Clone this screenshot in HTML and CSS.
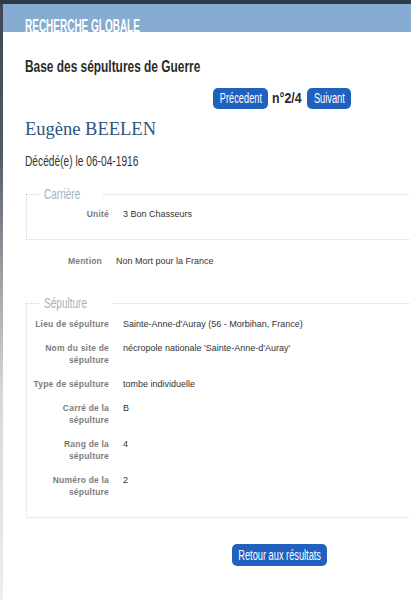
FILE: index.html
```html
<!DOCTYPE html>
<html lang="fr">
<head>
<meta charset="utf-8">
<title>Base des sépultures de Guerre</title>
<link rel="stylesheet" href="styles.css">
</head>
<body>
<div class="topbar"></div>
<div class="frame">
  <div class="edge"></div>
  <div class="main">
    <div class="banner"><span class="banner-title">RECHERCHE GLOBALE</span></div>
    <div class="content">
      <h1 class="base-title"><span class="sx">Base des sépultures de Guerre</span></h1>
      <div class="pager">
        <a class="btn btn-prev"><span class="btn-text">Précedent</span></a>
        <span class="pager-num"><span class="sx">n°2/4</span></span>
        <a class="btn btn-next"><span class="btn-text">Suivant</span></a>
      </div>
      <h2 class="name">Eugène BEELEN</h2>
      <p class="death"><span class="sx">Décédé(e) le 06-04-1916</span></p>

      <fieldset class="group group-carriere">
        <legend class="group-legend"><span class="sx">Carrière</span></legend>
        <div class="row"><div class="label">Unité</div><div class="value">3 Bon Chasseurs</div></div>
      </fieldset>

      <div class="row row-outside"><div class="label">Mention</div><div class="value">Non Mort pour la France</div></div>

      <fieldset class="group group-sepulture">
        <legend class="group-legend"><span class="sx">Sépulture</span></legend>
        <div class="row"><div class="label">Lieu de sépulture</div><div class="value">Sainte-Anne-d'Auray (56 - Morbihan, France)</div></div>
        <div class="row"><div class="label">Nom du site de sépulture</div><div class="value">nécropole nationale 'Sainte-Anne-d'Auray'</div></div>
        <div class="row"><div class="label">Type de sépulture</div><div class="value">tombe individuelle</div></div>
        <div class="row"><div class="label">Carré de la sépulture</div><div class="value">B</div></div>
        <div class="row"><div class="label">Rang de la sépulture</div><div class="value">4</div></div>
        <div class="row"><div class="label">Numéro de la sépulture</div><div class="value">2</div></div>
      </fieldset>

      <div class="back">
        <a class="btn btn-back"><span class="btn-text">Retour aux résultats</span></a>
      </div>
    </div>
  </div>
</div>
</body>
</html>
```
FILE: styles.css
```css
html, body {
  margin: 0;
  padding: 0;
  overflow: hidden;
  background: #ffffff;
}
body {
  font-family: "Liberation Sans", Arial, sans-serif;
  color: #333;
}
.topbar {
  height: 4px;
  background: #2e3b48;
}
.frame {
  display: flex;
  min-height: 596px;
}
.edge {
  width: 3px;
  flex: none;
  background: linear-gradient(#3d4652 0%, #525a64 25%, #9a9ea3 45%, #d6d7d8 65%, #eeeeee 100%);
}
.main {
  flex: 1;
  min-width: 0;
}
.sx {
  display: inline-block;
  white-space: nowrap;
  transform-origin: left center;
}
.banner {
  height: 28px;
  background: #86acd1;
  overflow: hidden;
  padding-left: 22px;
  box-sizing: border-box;
}
.banner-title {
  display: inline-block;
  white-space: nowrap;
  margin-top: 12px;
  font-size: 18px;
  font-weight: bold;
  line-height: 20px;
  color: #ffffff;
  transform: scaleX(0.555);
  transform-origin: left center;
}
.content {
  padding-left: 22px;
}
.base-title {
  margin: 0;
  padding-top: 25px;
  font-weight: bold;
  font-size: 17px;
  line-height: 20px;
  color: #2b2b2b;
}
.base-title .sx {
  transform: scaleX(0.7);
}
.pager {
  display: flex;
  align-items: center;
  gap: 4px;
  margin-top: 11px;
  padding-left: 188px;
}
.btn {
  display: flex;
  justify-content: center;
  align-items: center;
  height: 21px;
  background: #2061c0;
  color: #ffffff;
  border-radius: 5px;
  font-size: 14px;
  line-height: 21px;
  white-space: nowrap;
}
.btn-text {
  display: inline-block;
  white-space: nowrap;
  transform: scaleX(0.66);
  transform-origin: center center;
}
.btn-prev {
  width: 55px;
}
.btn-next {
  width: 44px;
}
.pager-num {
  width: 31px;
  font-weight: bold;
  font-size: 14px;
  line-height: 21px;
  color: #2b2b2b;
}
.pager-num .sx {
  transform: scaleX(0.88);
}
.name {
  margin: 8px 0 0;
  font-family: "Liberation Serif", "DejaVu Serif", serif;
  font-weight: normal;
  font-size: 18.5px;
  line-height: 24px;
  color: #2b5482;
}
.death {
  margin: 11px 0 0;
  font-size: 15px;
  line-height: 18px;
  color: #333;
}
.death .sx {
  transform: scaleX(0.68);
}
.group {
  margin: 16px 0 0 1px;
  width: 420px;
  border: 1px dotted #d8d8d8;
  padding: 0 0 0 5px;
  box-sizing: border-box;
}
.group-legend {
  margin-left: 8px;
  padding: 0 4px;
  font-size: 15px;
  line-height: 16px;
  color: #a3b2c2;
}
.group-legend .sx {
  transform: scaleX(0.67);
}
.group-carriere {
  padding-top: 6px;
  padding-bottom: 19px;
}
.group-sepulture {
  margin-top: 28px;
  padding-top: 7px;
  padding-bottom: 7px;
}
.row {
  display: grid;
  grid-template-columns: 77px 1fr;
  column-gap: 14px;
  margin-bottom: 12px;
  font-size: 9px;
  line-height: 12px;
}
.label {
  text-align: right;
  font-weight: bold;
  color: #7d7d7d;
  font-size: 8.5px;
  letter-spacing: 0.2px;
}
.value {
  color: #333;
}
.group-carriere .row {
  margin-bottom: 0;
}
.row-outside {
  margin-top: 15px;
  margin-bottom: 0;
}
.back {
  margin-top: 26px;
  padding-left: 207px;
}
.btn-back {
  display: inline-flex;
  width: 95px;
  height: 22px;
  line-height: 22px;
}
```
